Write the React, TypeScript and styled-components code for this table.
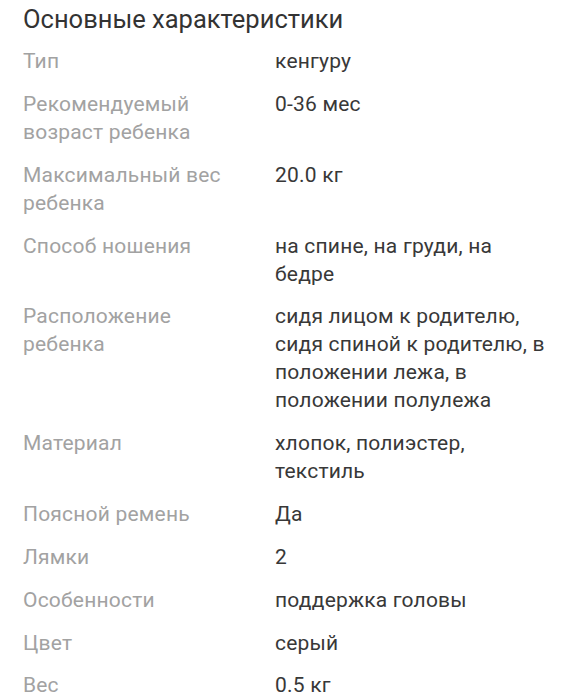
import React from 'react';
import styled, { createGlobalStyle } from 'styled-components';

const GlobalStyle = createGlobalStyle`
  html, body {
    margin: 0;
    padding: 0;
    background: #ffffff;
  }
  body {
    font-family: Roboto, "Noto Sans", "Liberation Sans", sans-serif;
    -webkit-font-smoothing: antialiased;
  }
`;

const Section = styled.section`
  padding: 3px 26px 0 23px;
`;

const Title = styled.h2`
  margin: 0 0 6px;
  font-size: 25.5px;
  line-height: 32px;
  font-weight: 400;
  color: #333333;
`;

const Specs = styled.dl`
  margin: 0;
  padding-top: 6px;
  display: grid;
  grid-template-columns: 252px 1fr;
  row-gap: 14.85px;
`;

const Label = styled.dt`
  margin: 0;
  padding-right: 37px;
  font-size: 21px;
  line-height: 28px;
  letter-spacing: 0.2px;
  color: #a2a2a2;
`;

const Value = styled.dd`
  margin: 0;
  font-size: 21px;
  line-height: 28px;
  letter-spacing: 0.2px;
  color: #383838;
`;

const specs: [string, string][] = [
  ['Тип', 'кенгуру'],
  ['Рекомендуемый возраст ребенка', '0-36 мес'],
  ['Максимальный вес ребенка', '20.0 кг'],
  ['Способ ношения', 'на спине, на груди, на бедре'],
  [
    'Расположение ребенка',
    'сидя лицом к родителю, сидя спиной к родителю, в положении лежа, в положении полулежа',
  ],
  ['Материал', 'хлопок, полиэстер, текстиль'],
  ['Поясной ремень', 'Да'],
  ['Лямки', '2'],
  ['Особенности', 'поддержка головы'],
  ['Цвет', 'серый'],
  ['Вес', '0.5 кг'],
];

const App: React.FC = () => {
  return (
    <>
      <GlobalStyle />
      <Section>
        <Title>Основные характеристики</Title>
        <Specs>
          {specs.map(([label, value]) => (
            <React.Fragment key={label}>
              <Label>{label}</Label>
              <Value>{value}</Value>
            </React.Fragment>
          ))}
        </Specs>
      </Section>
    </>
  );
};

export default App;
